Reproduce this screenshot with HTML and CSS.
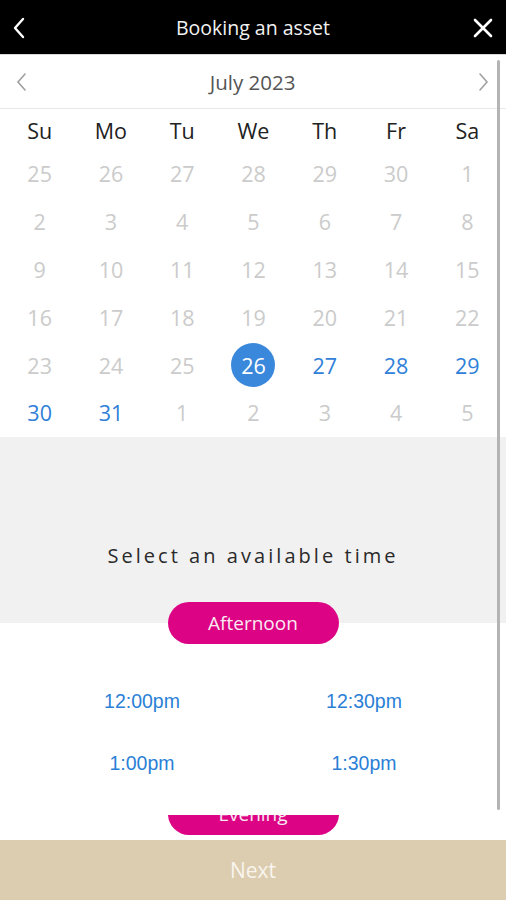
FILE: index.html
```html
<!DOCTYPE html>
<html lang="en">
<head>
<meta charset="utf-8">
<title>Booking an asset</title>
<link rel="stylesheet" href="styles.css">
</head>
<body>
<div class="app">
  <header class="topbar">
    <button class="icon-btn" aria-label="Back">
      <svg width="14" height="22" viewBox="0 0 14 22"><path d="M11 2 L3 11 L11 20" fill="none" stroke="#fff" stroke-width="2.4" stroke-linecap="round" stroke-linejoin="round"/></svg>
    </button>
    <h1 class="title">Booking an asset</h1>
    <button class="icon-btn" aria-label="Close">
      <svg width="22" height="22" viewBox="0 0 22 22"><path d="M3 3 L19 19 M19 3 L3 19" fill="none" stroke="#fff" stroke-width="2.6" stroke-linecap="round"/></svg>
    </button>
  </header>

  <main class="content">
    <section class="calendar">
      <div class="month-row">
        <svg class="chev" width="14" height="20" viewBox="0 0 14 20"><path d="M10 2 L3 10 L10 18" fill="none" stroke="#a0a0a0" stroke-width="1.6" stroke-linecap="round"/></svg>
        <span class="month">July 2023</span>
        <svg class="chev" width="14" height="20" viewBox="0 0 14 20"><path d="M4 2 L11 10 L4 18" fill="none" stroke="#a0a0a0" stroke-width="1.6" stroke-linecap="round"/></svg>
      </div>
      <div class="grid weekdays">
        <span>Su</span><span>Mo</span><span>Tu</span><span>We</span><span>Th</span><span>Fr</span><span>Sa</span>
      </div>
      <div class="grid days">
        <span class="off">25</span><span class="off">26</span><span class="off">27</span><span class="off">28</span><span class="off">29</span><span class="off">30</span><span class="off">1</span>
        <span class="off">2</span><span class="off">3</span><span class="off">4</span><span class="off">5</span><span class="off">6</span><span class="off">7</span><span class="off">8</span>
        <span class="off">9</span><span class="off">10</span><span class="off">11</span><span class="off">12</span><span class="off">13</span><span class="off">14</span><span class="off">15</span>
        <span class="off">16</span><span class="off">17</span><span class="off">18</span><span class="off">19</span><span class="off">20</span><span class="off">21</span><span class="off">22</span>
        <span class="off">23</span><span class="off">24</span><span class="off">25</span><span class="sel"><b>26</b></span><span class="on">27</span><span class="on">28</span><span class="on">29</span>
        <span class="on">30</span><span class="on">31</span><span class="off">1</span><span class="off">2</span><span class="off">3</span><span class="off">4</span><span class="off">5</span>
      </div>
    </section>

    <section class="prompt">
      <h2>Select an available time</h2>
    </section>

    <div class="pill-row split">
      <span class="pill">Afternoon</span>
    </div>

    <div class="times">
      <a class="time">12:00pm</a><a class="time">12:30pm</a>
      <a class="time">1:00pm</a><a class="time">1:30pm</a>
      <a class="time">2:00pm</a><a class="time">2:30pm</a>
    </div>

    <div class="pill-peek">
      <span class="pill">Evening</span>
    </div>

    <div class="scrollbar"></div>
  </main>

  <footer class="next-bar">Next</footer>
</div>
</body>
</html>
```

FILE: styles.css
```css
* { box-sizing: border-box; }
html, body { margin: 0; padding: 0; }
body {
  width: 506px;
  height: 900px;
  overflow: hidden;
  background: #fff;
  font-family: "Open Sans", "Noto Sans", sans-serif;
}
.app {
  display: flex;
  flex-direction: column;
  height: 900px;
}
.topbar {
  height: 55px;
  flex: none;
  background: #000;
  border-bottom: 1px solid #d9d9d9;
  display: flex;
  align-items: center;
  justify-content: space-between;
  padding: 1px 12px 0 12px;
}
.icon-btn {
  background: none;
  border: 0;
  padding: 0;
  width: 22px;
  height: 22px;
  display: flex;
  align-items: center;
  justify-content: flex-start;
}
.icon-btn:last-child { justify-content: flex-end; width: 22px; }
.title {
  margin: 0;
  color: #f2f2f2;
  font-size: 19.5px;
  font-weight: 400;
}
.content {
  flex: 1;
  position: relative;
  overflow: hidden;
  display: flex;
  flex-direction: column;
}
.calendar { background: #fff; }
.month-row {
  height: 54px;
  border-bottom: 1.5px solid #e8e8e8;
  display: flex;
  align-items: center;
  justify-content: space-between;
  padding: 0 16px 0 15px;
}
.month {
  font-size: 20.5px;
  color: #555;
}
.grid {
  display: grid;
  grid-template-columns: repeat(7, 1fr);
  padding: 0 3px 0 4px;
  text-align: center;
}
.weekdays span {
  height: 41px;
  line-height: 44px;
  font-size: 21.5px;
  color: #222;
}
.days span {
  height: 47.8px;
  display: flex;
  align-items: center;
  justify-content: center;
  font-size: 21.5px;
}
.days .off { color: #cbcbcb; }
.days .on { color: #2f80d8; }
.days .sel b {
  width: 44px;
  height: 44px;
  border-radius: 50%;
  background: #3a88dc;
  color: #fff;
  font-weight: 400;
  display: flex;
  align-items: center;
  justify-content: center;
}
.prompt {
  background: #f1f1f1;
  padding: 105px 0 32px;
  text-align: center;
}
.prompt h2 {
  margin: 0;
  font-size: 20px;
  line-height: 28px;
  font-weight: 400;
  letter-spacing: 3.05px;
  color: #2a2a2a;
}
.pill-row {
  display: flex;
  justify-content: center;
  flex: none;
}
.split {
  background: linear-gradient(to bottom, #f1f1f1 21px, #fff 21px);
}
.pill {
  width: 171px;
  height: 42px;
  border-radius: 21px;
  background: #dc0484;
  color: #fbe9f3;
  font-size: 19px;
  display: flex;
  align-items: center;
  justify-content: center;
}
.times {
  height: 171px;
  overflow: hidden;
  flex: none;
  display: grid;
  grid-template-columns: 1fr 1fr;
  grid-auto-rows: 62px;
  padding: 26px 31px 0 31px;
  font-family: "Liberation Sans", Arial, sans-serif;
}
.time {
  font-size: 19.5px;
  color: #2b7fd6;
  text-align: center;
  line-height: 62px;
  height: 62px;
}
.pill-peek {
  height: 22px;
  overflow: hidden;
  flex: none;
  display: flex;
  justify-content: center;
  align-items: flex-start;
}
.pill-peek .pill { margin-top: -22px; flex: none; }
.scrollbar {
  position: absolute;
  right: 6px;
  top: 5px;
  width: 3px;
  height: 750px;
  background: #b4b4b4;
  border-radius: 2px;
}
.next-bar {
  height: 60px;
  flex: none;
  background: #dccdb0;
  color: #f9f5ee;
  font-size: 21px;
  display: flex;
  align-items: center;
  justify-content: center;
}
```
